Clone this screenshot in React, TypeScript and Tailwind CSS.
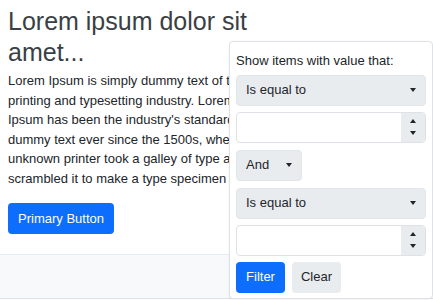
import React from "react";

function Caret({ up = false }: { up?: boolean }) {
  return (
    <svg width="6" height="4" viewBox="0 0 6 4" className="block">
      <path d={up ? "M0 4 L3 0 L6 4 Z" : "M0 0 L6 0 L3 4 Z"} fill="#212529" />
    </svg>
  );
}

function SelectBox({ label, className = "" }: { label: string; className?: string }) {
  return (
    <div
      className={`flex h-[31px] items-center justify-between rounded-[4px] border border-[#e2e5e9] bg-[#e9ecef] pl-[9px] pr-[9px] ${className}`}
    >
      <span>{label}</span>
      <Caret />
    </div>
  );
}

function NumberBox({ className = "" }: { className?: string }) {
  return (
    <div className={`flex h-[31px] overflow-hidden rounded-[4px] border border-[#dee2e6] bg-white ${className}`}>
      <div className="flex-1" />
      <div className="flex w-[24px] flex-col items-center justify-center gap-[8px] bg-[#e9ecef]">
        <Caret up />
        <Caret />
      </div>
    </div>
  );
}

export default function App() {
  const lines = [
    "Lorem Ipsum is simply dummy text of the",
    "printing and typesetting industry. Lorem",
    "Ipsum has been the industry's standard",
    "dummy text ever since the 1500s, when an",
    "unknown printer took a galley of type and",
    "scrambled it to make a type specimen book.",
  ];

  return (
    <div className="relative h-[300px] w-[433px] overflow-hidden bg-white font-['Liberation_Sans',Arial,sans-serif] text-[13px] leading-[19.5px] text-[#212529]">
      <div className="px-[8px] pt-[6px]">
        <h1 className="whitespace-nowrap text-[25px] font-light leading-[31px] text-[#3a3f44]">
          Lorem ipsum dolor sit
          <br />
          amet...
        </h1>
        <p className="mt-[3px] whitespace-nowrap">
          {lines.map((l, i) => (
            <React.Fragment key={i}>
              {l}
              {i < lines.length - 1 && <br />}
            </React.Fragment>
          ))}
        </p>
        <button className="mt-[15px] flex h-[31px] w-[106px] items-center justify-center rounded-[4px] bg-[#0d6efd] text-white">
          Primary Button
        </button>
      </div>
      <div className="mt-[20px] h-[45px] border-y border-t-[#e9ecef] border-b-[#dee2e6] bg-[#f8f9fa]" />

      <div className="absolute left-[229px] top-[41px] flex h-[258px] w-[204px] flex-col rounded-[4px] border border-[#dee2e6] bg-white px-[6px] pt-[9px] shadow-[0_1px_3px_rgba(0,0,0,0.06)]">
        <div>Show items with value that:</div>
        <SelectBox label="Is equal to" className="mt-[4px]" />
        <NumberBox className="mt-[6px]" />
        <SelectBox label="And" className="mt-[7px] w-[66px]" />
        <SelectBox label="Is equal to" className="mt-[7px]" />
        <NumberBox className="mt-[6px]" />
        <div className="mt-[6px] flex gap-[7px]">
          <button className="h-[31px] w-[49px] rounded-[4px] bg-[#0d6efd] text-white">Filter</button>
          <button className="h-[31px] w-[49px] rounded-[4px] bg-[#e9ecef] text-[#212529]">Clear</button>
        </div>
      </div>
    </div>
  );
}
